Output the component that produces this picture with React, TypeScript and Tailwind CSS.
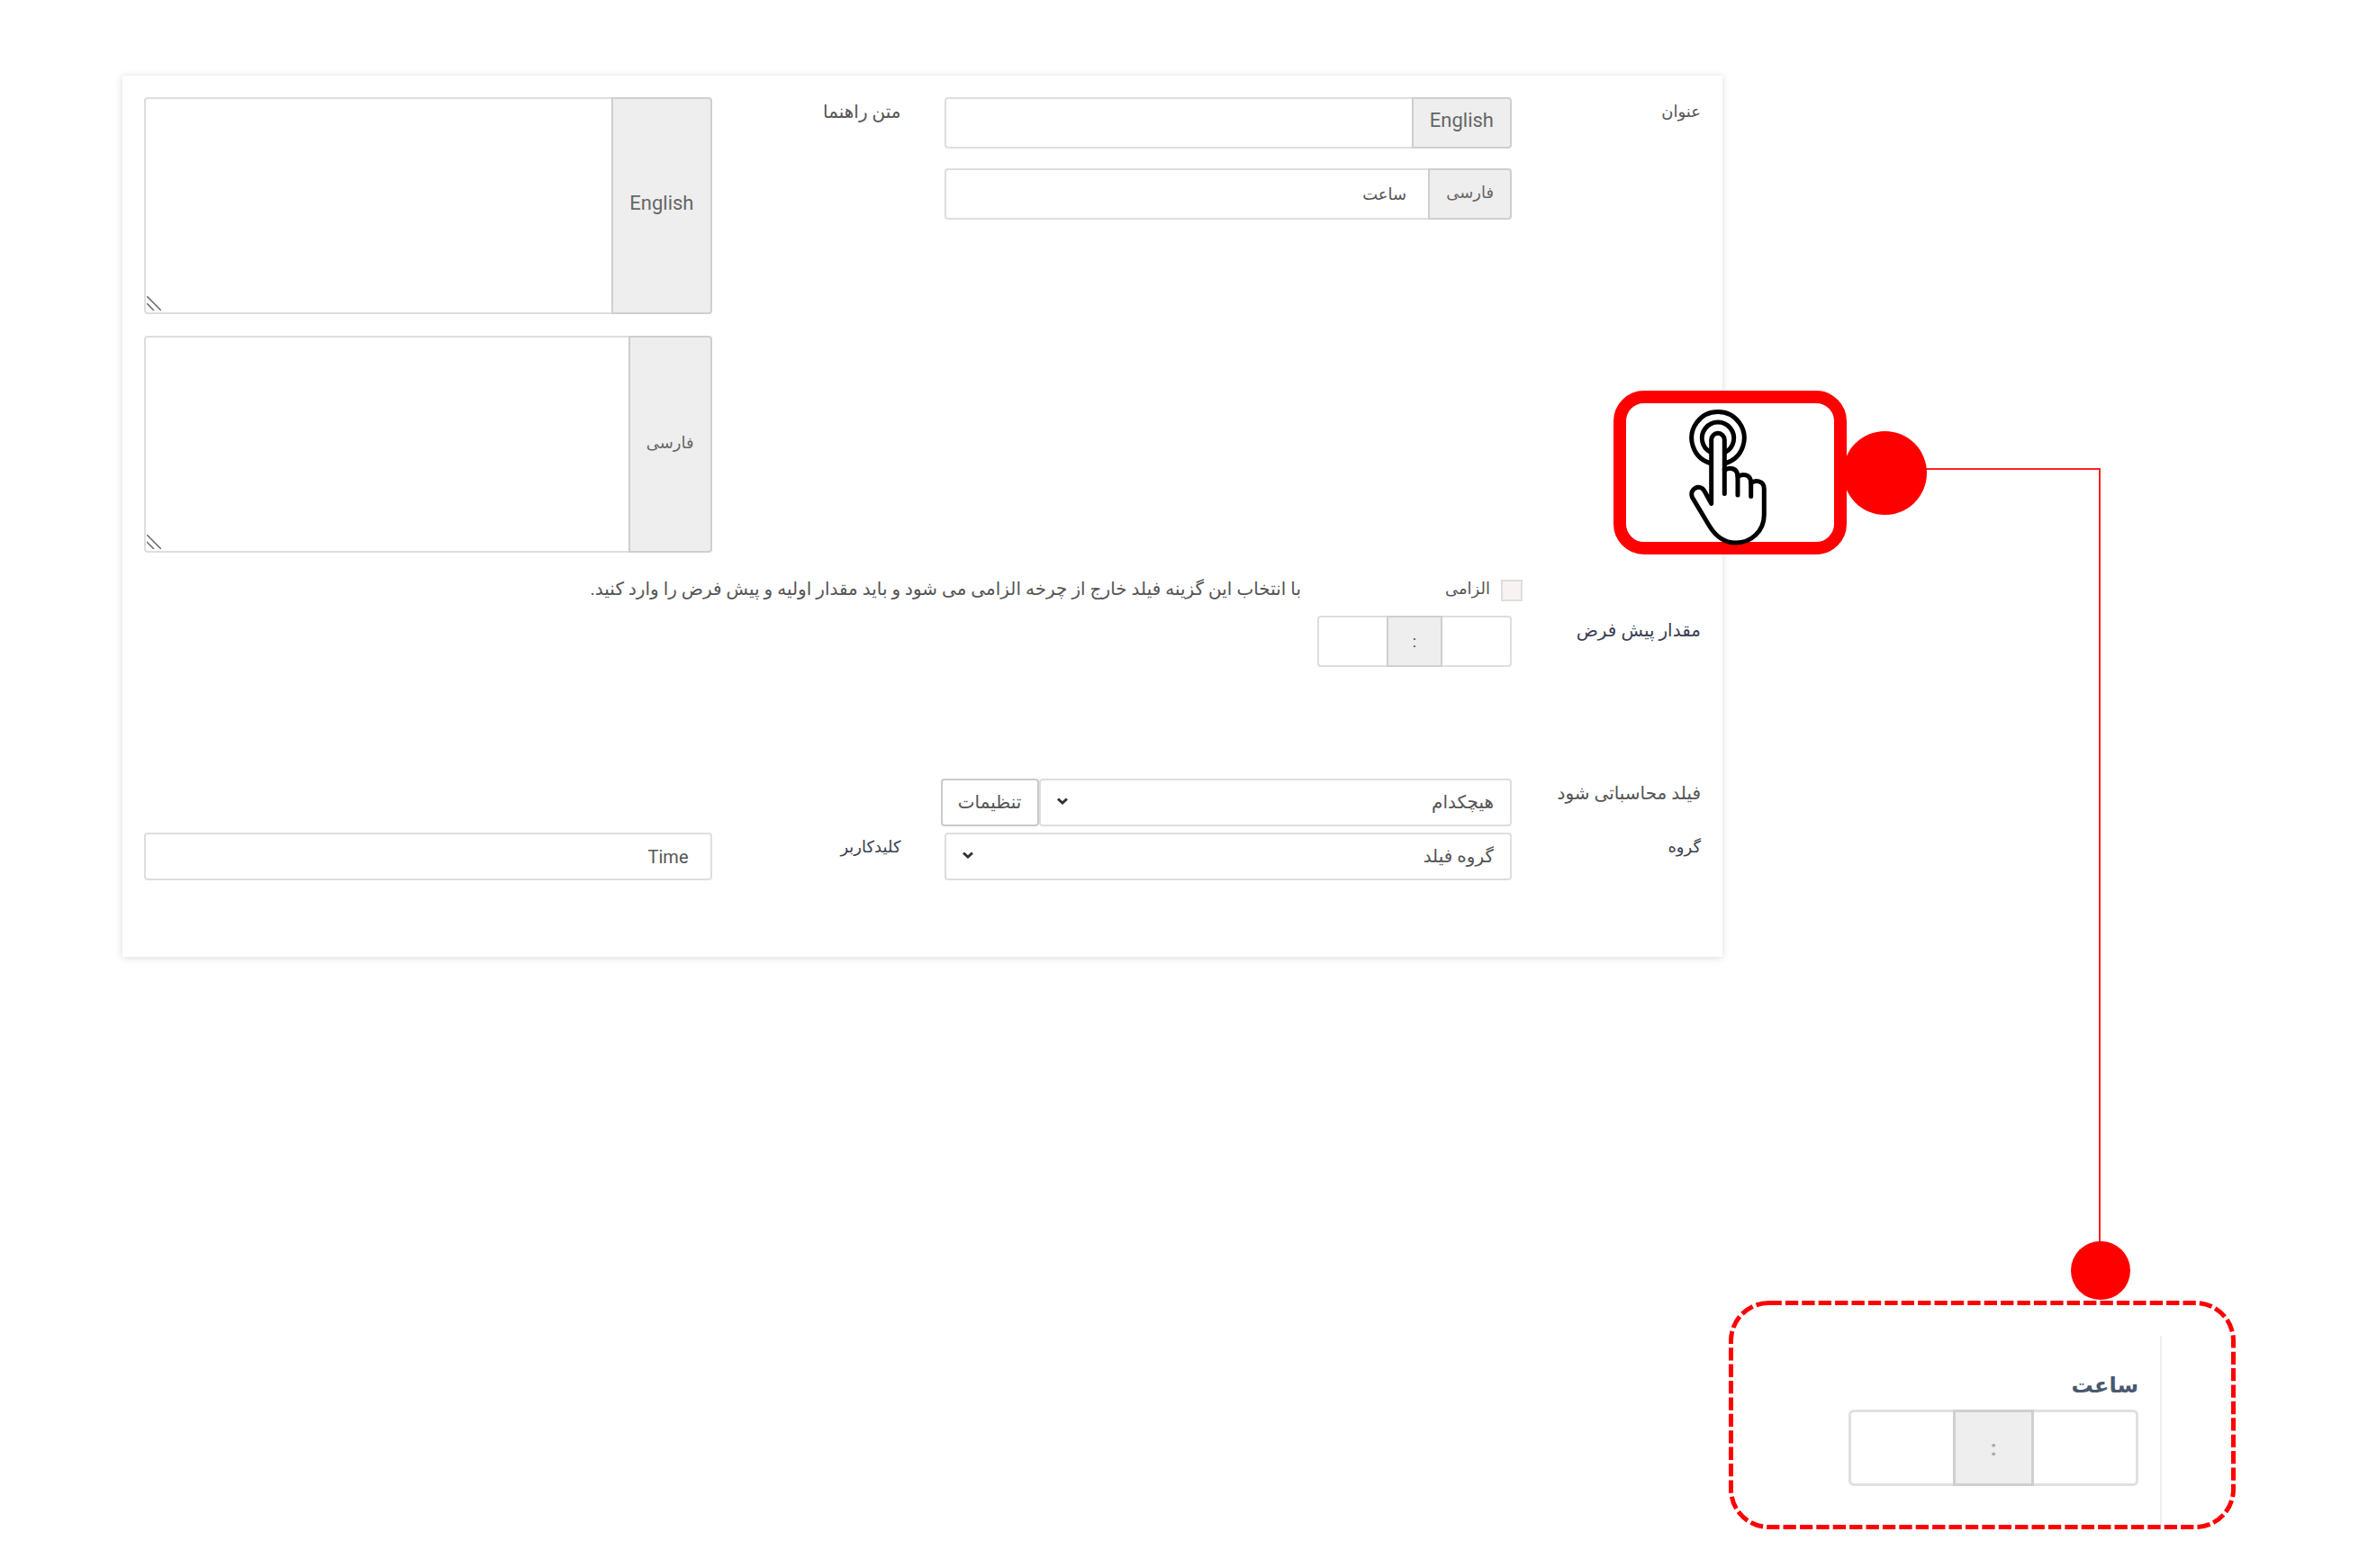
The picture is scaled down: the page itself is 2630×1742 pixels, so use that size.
import React, { useId } from "react";

const field =
  "min-w-0 flex-1 rounded-l border-2 border-[#dedede] bg-white px-6 text-[#555] outline-none";
const addon =
  "flex shrink-0 items-center justify-center rounded-r border-2 border-[#cfcfcf] bg-[#eeeeee] px-[18px] pb-1 text-[#666]";
const select =
  "h-full w-full appearance-none rounded border-2 border-[#dedede] bg-white px-[18px] pb-0.5 text-[#555]";

function LangInput({ lang, value, size }: { lang: string; value: string; size: string }) {
  const id = useId();
  return (
    <div className={"flex h-[57px] " + size}>
      <label htmlFor={id} className={addon}>{lang}</label>
      <input id={id} defaultValue={value} className={field + " border-r-0"} />
    </div>
  );
}

function LangTextarea({ lang, size }: { lang: string; size: string }) {
  const id = useId();
  return (
    <div className={"relative flex h-[241px] " + size}>
      <label htmlFor={id} className={addon}>{lang}</label>
      <textarea id={id} className={field + " resize-none border-r-0"} />
      <svg className="absolute bottom-1 left-[3px] h-4 w-4" viewBox="0 0 16 16" fill="none" stroke="#666" strokeWidth="1.5" aria-hidden="true">
        <path d="M0 0L16 16M0 8L8 16" />
      </svg>
    </div>
  );
}

function Chevron() {
  return (
    <svg className="pointer-events-none absolute left-5 top-[21px] h-2 w-3" viewBox="0 0 12 8" fill="none" stroke="#333" strokeWidth="3" aria-hidden="true">
      <path d="M1 1.5L6 6L11 1.5" />
    </svg>
  );
}

function Hand() {
  return (
    <svg className="absolute left-[83px] top-[21px] h-[152px] w-[88px]" viewBox="0 0 88 152" fill="none" stroke="#000" strokeWidth="5" strokeLinecap="round" strokeLinejoin="round" aria-hidden="true">
      <path d="M24 59.5A29.2 29.2 0 1 1 42 59.5" />
      <path d="M25 47.5A17.7 17.7 0 1 1 41 47.5" />
      <path
        fill="#fff"
        d="M25.7 104.5V33.6A7.3 7.3 0 0 1 40.3 33.6V67.5C45 63.5 55 64.5 55 74.5C60 71 69.7 71.5 69.7 81.5C74 78 84.3 78.5 84.3 88V117C84.3 135 70 148 52.7 148C40 148 30 140 23.3 129L4.6 97.7C0.5 88 13 81.5 18.3 91Z"
      />
      <path d="M40.3 66V93.5M55 73V95M69.7 80V96.5" />
    </svg>
  );
}

export default function App() {
  return (
    <div className="relative min-h-screen bg-white pb-[43px] pt-[84px] font-['Roboto','DejaVu_Sans',sans-serif] text-xl text-[#555]" dir="rtl">
      <form className="ml-[136px] mr-[717px] grid grid-cols-[210px_1fr_48px_210px_1fr] bg-white px-6 pb-[85px] pt-6 shadow-[0_1px_8px_rgba(0,0,0,0.15)]">
        <span className="text-lg leading-8">عنوان</span>
        <div className="flex flex-col gap-[22px]">
          <LangInput lang="English" value="" size="text-[22px]" />
          <LangInput lang="فارسی" value="ساعت" size="text-lg" />
        </div>
        <span className="col-start-4 leading-8">متن راهنما</span>
        <div className="flex flex-col gap-6">
          <LangTextarea lang="English" size="text-[22px]" />
          <LangTextarea lang="فارسی" size="text-lg" />
        </div>

        <div className="col-span-4 col-start-2 -mr-3 mt-[26px] flex h-8 items-start">
          <input id="required" type="checkbox" className="mt-1 h-6 w-6 appearance-none border-2 border-[#dedede] bg-[#f7f3f3]" />
          <label htmlFor="required" className="w-[222px] pr-3 text-lg leading-7">الزامی</label>
          <span className="leading-7">با انتخاب این گزینه فیلد خارج از چرخه الزامی می شود و باید مقدار اولیه و پیش فرض را وارد کنید.</span>
        </div>

        <span className="col-start-1 mt-3 leading-8 text-[#3a3f51]">مقدار پیش فرض</span>
        <div className="col-span-4 mt-3 flex h-[57px] w-[216px]">
          <input aria-label="ساعت" className="min-w-0 flex-1 rounded-r border-2 border-l-0 border-[#dedede]" />
          <span className="flex w-[62px] items-center justify-center border-2 border-[#cfcfcf] bg-[#eee] text-lg">:</span>
          <input aria-label="دقیقه" className="min-w-0 flex-1 rounded-l border-2 border-r-0 border-[#dedede]" />
        </div>

        <label htmlFor="calc" className="col-start-1 mt-[124px] leading-8">فیلد محاسباتی شود</label>
        <div className="-ml-1 mt-[124px] flex h-[53px]">
          <div className="relative flex-1">
            <select id="calc" className={select}>
              <option>هیچکدام</option>
            </select>
            <Chevron />
          </div>
          <button type="button" className="w-[109px] rounded border-2 border-[#cacaca] bg-white pb-0.5 text-[#555]">تنظیمات</button>
        </div>

        <label htmlFor="group" className="col-start-1 mt-[7px] text-lg leading-8 text-[#3a3f51]">گروه</label>
        <div className="relative mt-[7px] h-[53px]">
          <select id="group" className={select}>
            <option>گروه فیلد</option>
          </select>
          <Chevron />
        </div>
        <label htmlFor="key" className="col-start-4 mt-[7px] text-lg leading-8 text-[#3a3f51]">کلیدکاربر</label>
        <input id="key" defaultValue="Time" className="mt-[7px] h-[53px] w-full rounded border-2 border-[#dedede] px-6" />
      </form>

      <section className="relative ml-auto mr-[147px] mt-[382px] h-[254px] w-[563px]" dir="ltr">
        <svg className="absolute inset-0 h-full w-full" fill="none" stroke="#f00" strokeWidth="5" strokeDasharray="14.3 4.1" aria-hidden="true">
          <rect x="2.5" y="2.5" width="558" height="249" rx="42" />
        </svg>
        <div className="mr-[82px] h-full pb-1 pt-[39px]">
          <div className="h-full border-r-2 border-[#eee] pr-6" dir="rtl">
            <label htmlFor="hour" className="block pb-1 pt-8 text-2xl font-bold leading-[46px] text-[#4a5870]">ساعت</label>
            <div className="flex h-[85px] w-[322px]">
              <input id="hour" className="min-w-0 flex-1 rounded-r-md border-[3px] border-l-0 border-[#e0e0e0]" />
              <span className="flex w-[90px] items-center justify-center border-[3px] border-[#cfcfcf] bg-[#eee] text-2xl font-bold text-[#aaa]">:</span>
              <input aria-label="دقیقه" className="min-w-0 flex-1 rounded-l-md border-[3px] border-r-0 border-[#e0e0e0]" />
            </div>
          </div>
        </div>
      </section>

      <div className="absolute right-[579px] top-[434px] h-[182px] w-[259px] rounded-[34px] border-[14px] border-[#f00] bg-white" />
      <div className="absolute right-[579px] top-[434px] h-[182px] w-[259px]"><Hand /></div>
      <div className="absolute right-[297px] top-[520px] h-[870px] w-[250px] border-r-2 border-t-2 border-[#ff2020]" />
      <div className="absolute right-[490px] top-[479px] h-[93px] w-[93px] rounded-full bg-[#f00]" />
      <div className="absolute right-[264px] top-[1379px] h-[65px] w-[66px] rounded-full bg-[#f00]" />
    </div>
  );
}
